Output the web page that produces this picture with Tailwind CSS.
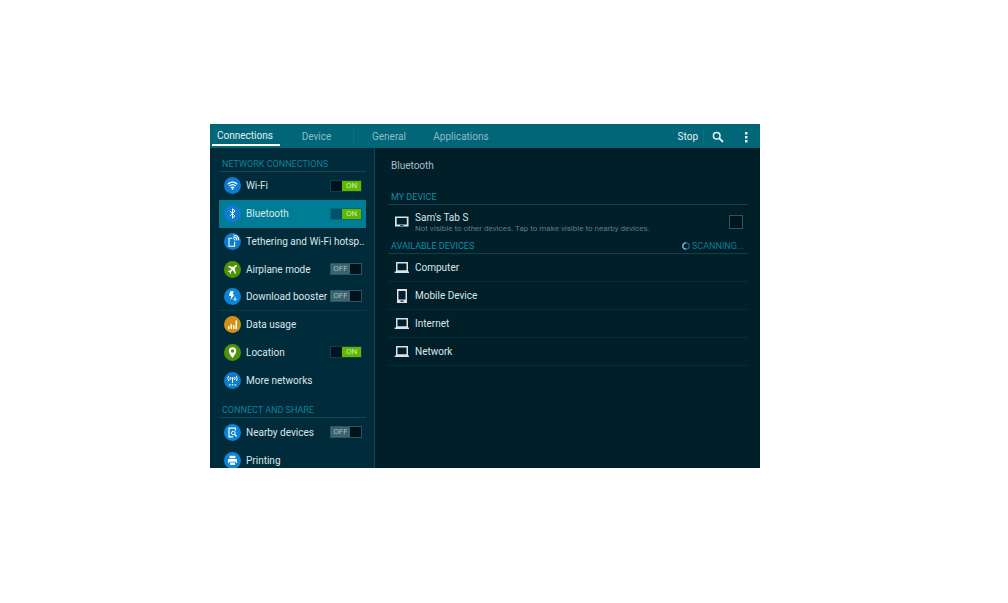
<!DOCTYPE html>
<html lang="en">

<head>
    <meta charset="UTF-8" />
    <meta name="viewport" content="width=device-width, initial-scale=1.0" />
    <title>Settings - Bluetooth</title>
    <script src="https://cdn.jsdelivr.net/npm/@tailwindcss/browser@4"></script>
</head>

<body class="bg-white font-['Roboto',sans-serif]">
    <div class="pt-[124px] pl-[210px] pr-[248px]">
        <div class="flex flex-col aspect-[550/344] overflow-hidden bg-[#001f29] text-[#dbe6ea] text-[10px] leading-4">

            <!-- Top bar -->
            <header class="flex items-stretch h-6 shrink-0 bg-[#006678]">
                <nav class="flex flex-1 text-[#8fbcc5]">
                    <a href="#" class="flex items-center w-[68px] ml-[2px] pl-[5px] pt-1 mb-[2px] border-b-2 border-white text-[#e6f1f3]">Connections</a>
                    <a href="#" class="flex items-center justify-center w-[74px] my-1 pt-px border-r border-[#0b7182]">Device</a>
                    <a href="#" class="flex items-center justify-center w-[70px] pt-px">General</a>
                    <a href="#" class="flex items-center justify-center w-[74px] pt-px">Applications</a>
                </nav>
                <div class="flex items-center pr-2 pt-px text-[#e6f1f3]">
                    <button class="pr-[5px] border-r border-[#0b7182]">Stop</button>
                    <button class="pl-2 pr-4" aria-label="Search">
                        <svg class="size-3" viewBox="0 0 12 12" fill="none" stroke="currentColor">
                            <circle cx="4.7" cy="4.7" r="3.3" stroke-width="1.5" />
                            <path d="M7.2 7.2L11 11" stroke-width="1.8" />
                        </svg>
                    </button>
                    <button aria-label="More options">
                        <svg class="size-3" viewBox="0 0 12 12" fill="currentColor">
                            <path d="M5 1h2.500v2.500H5zM5 5h2.500v2.500H5zM5 9h2.500v2.500H5z" />
                        </svg>
                    </button>
                </div>
            </header>

            <div class="flex flex-1 min-h-0">
                <!-- Sidebar -->
                <aside class="w-[30%] shrink-0 overflow-hidden bg-[#002b3a] border-r border-[#1b4450] pl-[9px] pr-2">
                    <h2 class="flex items-end h-6 pl-[3px] border-b border-[#0f4855] text-[9px] leading-[14px] text-[#128195]">NETWORK CONNECTIONS</h2>
                    <ul class="grid grid-cols-1 auto-rows-fr h-[222px]">
                        <li class="flex items-center pl-[5px] pr-1">
                            <svg class="size-[17px] shrink-0 mr-[5px]" viewBox="0 0 17 17">
                                <circle cx="8.5" cy="8.5" r="8.5" fill="#0c7bd0" />
                                <path d="M3.7 7.2Q8.5 3 13.3 7.2M5.3 9.1Q8.5 6.3 11.7 9.1M6.8 10.8Q8.5 9.4 10.2 10.8" fill="none" stroke="#fff" stroke-width="1.2" />
                                <circle cx="8.5" cy="12" r=".9" fill="#fff" />
                            </svg>
                            <a href="#" class="flex-1 pt-px">Wi-Fi</a>
                            <button role="switch" aria-checked="true" aria-label="Wi-Fi" class="flex w-8 h-3 border border-[#0d404d] bg-[#00131c] text-[8px] leading-[10px] text-[#c9eda2]"><span class="ml-auto w-[19px] bg-[#62b800]">ON</span></button>
                        </li>
                        <li class="flex items-center pl-[5px] pr-1 bg-[#007d96]">
                            <svg class="size-[17px] shrink-0 mr-[5px]" viewBox="0 0 17 17">
                                <circle cx="8.5" cy="8.5" r="8.5" fill="#0c7bd0" />
                                <path d="M5.7 5.9l5.3 5-2.5 2.3V3.8L11 6.1l-5.3 5" fill="none" stroke="#fff" stroke-width="1" />
                            </svg>
                            <a href="#" class="flex-1 pt-px">Bluetooth</a>
                            <button role="switch" aria-checked="true" aria-label="Bluetooth" class="flex w-8 h-3 border border-[#08687c] bg-[#00536a] text-[8px] leading-[10px] text-[#c9eda2]"><span class="ml-auto w-[19px] bg-[#62b800]">ON</span></button>
                        </li>
                        <li class="flex items-center pl-[5px] pr-1">
                            <svg class="size-[17px] shrink-0 mr-[5px]" viewBox="0 0 17 17">
                                <circle cx="8.5" cy="8.5" r="8.5" fill="#0c7bd0" />
                                <path d="M8.3 5.2H5v8h5.6V8.7M9.2 5.8q1.8 0 1.8 1.8M9.3 3.9q3.6 0 3.6 3.6M9.5 2q5.2.1 5.2 5.2" fill="none" stroke="#fff" stroke-width="1.1" />
                            </svg>
                            <a href="#" class="whitespace-nowrap pt-px">Tethering and Wi-Fi hotsp..</a>
                        </li>
                        <li class="flex items-center pl-[5px] pr-1">
                            <svg class="size-[17px] shrink-0 mr-[5px]" viewBox="0 0 17 17">
                                <circle cx="8.5" cy="8.5" r="8.5" fill="#4f9208" />
                                <path d="M12.8 4.2c-.6-.5-1.4-.1-2 .5L9.4 6.1 4.8 4.9l-.9.9 3.7 2.1-1.8 1.9-1.4-.2-.7.7 1.8.9.9 1.9.7-.7-.2-1.5 1.9-1.8 2.2 3.8.9-.9-1.3-4.7 1.5-1.4c.6-.5 1.1-1.2.7-1.7z" fill="#fff" />
                            </svg>
                            <a href="#" class="flex-1 pt-px">Airplane mode</a>
                            <button role="switch" aria-checked="false" aria-label="Airplane mode" class="flex w-8 h-3 border border-[#2c5560] bg-[#00131c] text-[8px] leading-[10px] text-[#a5bac0]"><span class="w-[19px] bg-[#3c6370]">OFF</span></button>
                        </li>
                        <li class="flex items-center pl-[5px] pr-1 border-b border-[#0a3a47]">
                            <svg class="size-[17px] shrink-0 mr-[5px]" viewBox="0 0 17 17">
                                <circle cx="8.5" cy="8.5" r="8.5" fill="#0c84d8" />
                                <path d="M6.2 3.2h3.6L8.6 6.4h1.9L6.4 12l.8-4H4.9z" fill="#fff" />
                                <path d="M11 8.7v3.2M9.3 10.7l1.7 1.8 1.7-1.8" fill="none" stroke="#fff" stroke-width="1" />
                            </svg>
                            <a href="#" class="flex-1 whitespace-nowrap pt-px">Download booster</a>
                            <button role="switch" aria-checked="false" aria-label="Download booster" class="flex w-8 h-3 border border-[#2c5560] bg-[#00131c] text-[8px] leading-[10px] text-[#a5bac0]"><span class="w-[19px] bg-[#3c6370]">OFF</span></button>
                        </li>
                        <li class="flex items-center pl-[5px] pr-1">
                            <svg class="size-[17px] shrink-0 mr-[5px]" viewBox="0 0 17 17">
                                <circle cx="8.5" cy="8.5" r="8.5" fill="#cf9118" />
                                <path d="M4 10.2h1.5V13H4zM6.5 8.3H8V13H6.500zM9 9.300h1.500V13H9zM11.500 4.500H13V13h-1.500z" fill="#fff" />
                            </svg>
                            <a href="#" class="flex-1 pt-px">Data usage</a>
                        </li>
                        <li class="flex items-center pl-[5px] pr-1">
                            <svg class="size-[17px] shrink-0 mr-[5px]" viewBox="0 0 17 17">
                                <circle cx="8.5" cy="8.5" r="8.5" fill="#4f9208" />
                                <path fill-rule="evenodd" d="M8.500 3.200a3.700 3.700 0 0 0-3.700 3.700c0 2.700 3.700 6.900 3.700 6.900s3.700-4.200 3.700-6.900a3.700 3.700 0 0 0-3.700-3.700zm0 2.100a1.700 1.700 0 1 1 0 3.400 1.700 1.700 0 0 1 0-3.400z" fill="#fff" />
                            </svg>
                            <a href="#" class="flex-1 pt-px">Location</a>
                            <button role="switch" aria-checked="true" aria-label="Location" class="flex w-8 h-3 border border-[#0d404d] bg-[#00131c] text-[8px] leading-[10px] text-[#c9eda2]"><span class="ml-auto w-[19px] bg-[#62b800]">ON</span></button>
                        </li>
                        <li class="flex items-center pl-[5px] pr-1">
                            <svg class="size-[17px] shrink-0 mr-[5px]" viewBox="0 0 17 17">
                                <circle cx="8.5" cy="8.5" r="8.5" fill="#0c7bd0" />
                                <path d="M4.700 4q-1.800 2.500 0 5M6.400 5q-1 1.500 0 3M12.300 4q1.800 2.500 0 5M10.600 5q1 1.500 0 3M8.500 6.500V11" fill="none" stroke="#fff" stroke-width="1" />
                                <circle cx="8.500" cy="6.300" r="1.100" fill="#fff" />
                                <path d="M5 12.200h1.500v1.300H5zM7.800 12.200h1.500v1.300H7.800zM10.600 12.200h1.500v1.300h-1.500z" fill="#fff" />
                            </svg>
                            <a href="#" class="flex-1 pt-px">More networks</a>
                        </li>
                    </ul>

                    <h2 class="flex items-end h-6 pl-[3px] border-b border-[#0f4855] text-[9px] leading-[14px] text-[#128195]">CONNECT AND SHARE</h2>
                    <ul>
                        <li class="flex items-center h-7 pl-[5px] pr-1">
                            <svg class="size-[17px] shrink-0 mr-[5px]" viewBox="0 0 17 17">
                                <circle cx="8.5" cy="8.5" r="8.5" fill="#0c84d8" />
                                <path d="M11.500 6.500V4.200H5v8.600h4M6.800 12.800H5" fill="none" stroke="#fff" stroke-width="1.200" />
                                <circle cx="9.300" cy="9" r="1.800" fill="none" stroke="#fff" />
                                <path d="M10.600 10.300l2 2.200" stroke="#fff" stroke-width="1.200" />
                            </svg>
                            <a href="#" class="flex-1 pt-px">Nearby devices</a>
                            <button role="switch" aria-checked="false" aria-label="Nearby devices" class="flex w-8 h-3 border border-[#2c5560] bg-[#00131c] text-[8px] leading-[10px] text-[#a5bac0]"><span class="w-[19px] bg-[#3c6370]">OFF</span></button>
                        </li>
                        <li class="flex items-center h-7 pl-[5px] pr-1">
                            <svg class="size-[17px] shrink-0 mr-[5px]" viewBox="0 0 17 17">
                                <circle cx="8.5" cy="8.5" r="8.5" fill="#0c84d8" />
                                <path fill-rule="evenodd" d="M5.500 3.800h6v2.400h-6zM4 7h9v4h-1.200V9.700H5.200V11H4zM6 10.500h5V13H6z" fill="#fff" />
                            </svg>
                            <a href="#" class="flex-1 pt-px">Printing</a>
                        </li>
                    </ul>
                </aside>

                <!-- Bluetooth panel -->
                <main class="flex-1 pl-[13px] pr-3">
                    <h1 class="flex items-center h-[34px] pl-[3px] pt-px text-[#aebdc3]">Bluetooth</h1>

                    <h2 class="flex items-end h-[23px] pl-[3px] border-b border-[#0d424a] text-[9px] leading-[14px] text-[#128da6]">MY DEVICE</h2>
                    <div class="flex items-center h-[34px] pl-[6px] pr-[5px]">
                        <svg class="w-4 h-[14px] shrink-0 mr-[5px]" viewBox="0 0 16 14">
                            <path fill-rule="evenodd" d="M1 1.500h13.500v10H1zM2.700 3v6.500h10.100V3zM6 10.200v.8h3.500v-.8z" fill="#dbe3e8" />
                        </svg>
                        <label for="visible" class="flex-1 pt-px">
                            <span class="block leading-3">Sam's Tab S</span>
                            <span class="block text-[8px] leading-[10px] text-[#5f7b84]">Not visible to other devices. Tap to make visible to nearby devices.</span>
                        </label>
                        <input id="visible" type="checkbox" class="appearance-none size-[14px] border border-[#36505a] bg-[#00141c]" />
                    </div>

                    <div class="flex items-end justify-between h-[15px] pl-[3px] pr-1 border-b border-[#0d424a] text-[9px] leading-[14px] text-[#128da6]">
                        <h2>AVAILABLE DEVICES</h2>
                        <span class="flex items-center gap-[2px] text-[#127c8c]">
                            <svg class="size-2" viewBox="0 0 8 8" fill="none">
                                <circle cx="4" cy="4" r="3.200" stroke="#2a5f8c" stroke-width="1.300" />
                                <path d="M4 7.200A3.200 3.200 0 0 1 4 .8" stroke="#7fb4dc" stroke-width="1.300" />
                            </svg>
                            SCANNING...
                        </span>
                    </div>
                    <ul>
                        <li class="flex items-center h-7 pl-[6px] border-b border-[#052d37]">
                            <svg class="w-4 h-[14px] mr-[5px]" viewBox="0 0 16 14">
                                <path fill-rule="evenodd" d="M2 1h12v9.500H2zM3.500 2.500v6.700h9V2.500zM.7 10.500h14.300V12H.7z" fill="#dbe3e8" />
                            </svg>
                            <a href="#" class="pt-px">Computer</a>
                        </li>
                        <li class="flex items-center h-7 pl-[6px] border-b border-[#052d37]">
                            <svg class="w-4 h-[14px] mr-[5px]" viewBox="0 0 16 14">
                                <path fill-rule="evenodd" d="M3 0h10v14H3zM4.500 2v8.500h7V2zM6.500 11.600v1.100h3v-1.100z" fill="#dbe3e8" />
                            </svg>
                            <a href="#" class="pt-px">Mobile Device</a>
                        </li>
                        <li class="flex items-center h-7 pl-[6px] border-b border-[#052d37]">
                            <svg class="w-4 h-[14px] mr-[5px]" viewBox="0 0 16 14">
                                <path fill-rule="evenodd" d="M2 1h12v9.500H2zM3.500 2.500v6.700h9V2.500zM.7 10.500h14.300V12H.7z" fill="#dbe3e8" />
                            </svg>
                            <a href="#" class="pt-px">Internet</a>
                        </li>
                        <li class="flex items-center h-7 pl-[6px] border-b border-[#052d37]">
                            <svg class="w-4 h-[14px] mr-[5px]" viewBox="0 0 16 14">
                                <path fill-rule="evenodd" d="M2 1h12v9.500H2zM3.500 2.500v6.700h9V2.500zM.7 10.500h14.300V12H.7z" fill="#dbe3e8" />
                            </svg>
                            <a href="#" class="pt-px">Network</a>
                        </li>
                    </ul>
                </main>
            </div>
        </div>
    </div>
</body>

</html>
